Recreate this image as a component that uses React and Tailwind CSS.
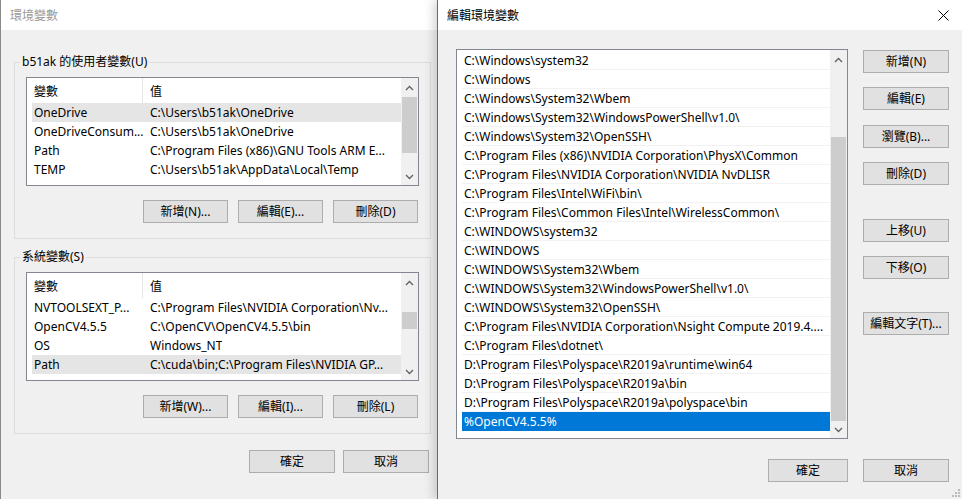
import React from 'react';

const Up = () => (
  <svg width="9" height="6" viewBox="0 0 9 6">
    <path d="M1 5L4.5 1.5L8 5" fill="none" stroke="#606060" strokeWidth="1.3" />
  </svg>
);
const Down = () => (
  <svg width="9" height="6" viewBox="0 0 9 6">
    <path d="M1 1L4.5 4.5L8 1" fill="none" stroke="#606060" strokeWidth="1.3" />
  </svg>
);

function ScrollBar({ pt, h }) {
  return (
    <div className="w-[17px] shrink-0 bg-[#f0f0f0] flex flex-col">
      <div className="h-[17px] shrink-0 flex items-center justify-center pt-[2px]">
        <Up />
      </div>
      <div className={`flex-1 flex flex-col ${pt}`}>
        <div className={`mx-[1px] bg-[#cdcdcd] ${h}`} />
      </div>
      <div className="h-[17px] shrink-0 flex items-center justify-center">
        <Down />
      </div>
    </div>
  );
}

function Btn({ children, w = 'w-[85px]', extra = '' }) {
  return (
    <div
      className={`${w} ${extra} h-[23px] shrink-0 border border-[#adadad] bg-[#e1e1e1] flex items-center justify-center leading-none`}
    >
      {children}
    </div>
  );
}

function VarList({ rows, sel, mt, pt, h }) {
  return (
    <div className={`${mt} ml-[6px] w-[393px] h-[109px] border border-[#828790] bg-white flex overflow-hidden`}>
      <div className="flex-1 pl-[5px] overflow-hidden">
        <div className="h-[25px] flex">
          <div className="w-[111px] shrink-0 border-r border-[#e5e5e5] pl-[2px] flex items-center pt-[2px]">變數</div>
          <div className="pl-[7px] flex items-center pt-[2px]">值</div>
        </div>
        {rows.map(([k, v], i) => (
          <div key={i} className={`h-[19px] flex items-center pt-[1px] ${i === sel ? 'bg-[#e5e5e5]' : ''}`}>
            <div className="w-[111px] shrink-0 pl-[2px] whitespace-nowrap overflow-hidden">{k}</div>
            <div className="pl-[7px] whitespace-nowrap overflow-hidden">{v}</div>
          </div>
        ))}
      </div>
      <ScrollBar pt={pt} h={h} />
    </div>
  );
}

const userVars = [
  ['OneDrive', 'C:\\Users\\b51ak\\OneDrive'],
  ['OneDriveConsum...', 'C:\\Users\\b51ak\\OneDrive'],
  ['Path', 'C:\\Program Files (x86)\\GNU Tools ARM E...'],
  ['TEMP', 'C:\\Users\\b51ak\\AppData\\Local\\Temp'],
];

const sysVars = [
  ['NVTOOLSEXT_P...', 'C:\\Program Files\\NVIDIA Corporation\\Nv...'],
  ['OpenCV4.5.5', 'C:\\OpenCV\\OpenCV4.5.5\\bin'],
  ['OS', 'Windows_NT'],
  ['Path', 'C:\\cuda\\bin;C:\\Program Files\\NVIDIA GP...'],
];

const paths = [
  'C:\\Windows\\system32',
  'C:\\Windows',
  'C:\\Windows\\System32\\Wbem',
  'C:\\Windows\\System32\\WindowsPowerShell\\v1.0\\',
  'C:\\Windows\\System32\\OpenSSH\\',
  'C:\\Program Files (x86)\\NVIDIA Corporation\\PhysX\\Common',
  'C:\\Program Files\\NVIDIA Corporation\\NVIDIA NvDLISR',
  'C:\\Program Files\\Intel\\WiFi\\bin\\',
  'C:\\Program Files\\Common Files\\Intel\\WirelessCommon\\',
  'C:\\WINDOWS\\system32',
  'C:\\WINDOWS',
  'C:\\WINDOWS\\System32\\Wbem',
  'C:\\WINDOWS\\System32\\WindowsPowerShell\\v1.0\\',
  'C:\\WINDOWS\\System32\\OpenSSH\\',
  'C:\\Program Files\\NVIDIA Corporation\\Nsight Compute 2019.4....',
  'C:\\Program Files\\dotnet\\',
  'D:\\Program Files\\Polyspace\\R2019a\\runtime\\win64',
  'D:\\Program Files\\Polyspace\\R2019a\\bin',
  'D:\\Program Files\\Polyspace\\R2019a\\polyspace\\bin',
  '%OpenCV4.5.5%',
];

function LeftWindow() {
  return (
    <div className="w-[437px] shrink-0 h-full border-l border-[#8a8a8a] flex flex-col bg-[#f0f0f0]">
      <div className="h-[30px] shrink-0 bg-white flex items-center pl-[9px] pt-[1px] text-[#999999]">環境變數</div>
      <div className="flex flex-col">
        <fieldset className="ml-[13px] mt-[24px] w-[417px] border border-[#dcdcdc] pl-[5px] pb-[15px]">
          <legend className="px-[2px] leading-[16px]">b51ak 的使用者變數(U)</legend>
          <VarList rows={userVars} sel={0} mt="mt-[7px]" pt="pt-[2px]" h="h-[56px]" />
          <div className="mt-[14px] flex justify-end gap-[10px] pr-[12px]">
            <Btn>新增(N)...</Btn>
            <Btn>編輯(E)...</Btn>
            <Btn>刪除(D)</Btn>
          </div>
        </fieldset>
        <fieldset className="ml-[13px] mt-[10px] w-[417px] border border-[#dcdcdc] pl-[5px] pb-[15px]">
          <legend className="px-[2px] leading-[16px]">系統變數(S)</legend>
          <VarList rows={sysVars} sel={3} mt="mt-[7px]" pt="pt-[22px]" h="h-[17px]" />
          <div className="mt-[14px] flex justify-end gap-[10px] pr-[12px]">
            <Btn>新增(W)...</Btn>
            <Btn>編輯(I)...</Btn>
            <Btn>刪除(L)</Btn>
          </div>
        </fieldset>
        <div className="mt-[16px] flex justify-end gap-[8px] pr-[8px]">
          <Btn w="w-[86px]">確定</Btn>
          <Btn w="w-[86px]">取消</Btn>
        </div>
      </div>
    </div>
  );
}

function RightWindow() {
  return (
    <div className="relative z-10 flex-1 h-full border-l border-[#6b6b6b] bg-[#f0f0f0] flex flex-col shadow-[-3px_0_10px_rgba(0,0,0,0.18)]">
      <div className="h-[30px] shrink-0 bg-white flex items-center justify-between pl-[9px] pr-[13px]">
        <span className="pt-[1px]">編輯環境變數</span>
        <svg width="11" height="11" viewBox="0 0 11 11">
          <path d="M0.5 0.5L10.5 10.5M10.5 0.5L0.5 10.5" stroke="#000" strokeWidth="1" />
        </svg>
      </div>
      <div className="flex pl-[18px]">
        <div className="mt-[19px] w-[392px] h-[390px] border border-[#828790] bg-white flex overflow-hidden">
          <div className="flex-1 pl-[5px] pt-[1px] overflow-hidden">
            {paths.map((p, i) =>
              i === paths.length - 1 ? (
                <div key={i} className="h-[19px] flex items-center pl-[2px] pt-[1px] bg-[#0078d7] text-white whitespace-nowrap">
                  {p}
                </div>
              ) : (
                <div
                  key={i}
                  className="h-[19px] flex items-center pl-[2px] pt-[1px] border-b border-[#f2f2f2] whitespace-nowrap overflow-hidden"
                >
                  {p}
                </div>
              )
            )}
          </div>
          <div className="w-[17px] shrink-0 bg-[#f0f0f0] flex flex-col">
            <div className="h-[17px] shrink-0 flex items-center justify-center pt-[2px]">
              <Up />
            </div>
            <div className="flex-1 flex flex-col pt-[70px]">
              <div className="mx-[1px] bg-[#cdcdcd] flex-1" />
            </div>
            <div className="h-[17px] shrink-0 flex items-center justify-center">
              <Down />
            </div>
          </div>
        </div>
        <div className="ml-[15px] mt-[20px] flex flex-col">
          <Btn w="w-[86px]">新增(N)</Btn>
          <Btn w="w-[86px]" extra="mt-[14px]">編輯(E)</Btn>
          <Btn w="w-[86px]" extra="mt-[15px]">瀏覽(B)...</Btn>
          <Btn w="w-[86px]" extra="mt-[14px]">刪除(D)</Btn>
          <Btn w="w-[86px]" extra="mt-[34px]">上移(U)</Btn>
          <Btn w="w-[86px]" extra="mt-[14px]">下移(O)</Btn>
          <Btn w="w-[86px]" extra="mt-[33px]">編輯文字(T)...</Btn>
        </div>
      </div>
      <div className="mt-[20px] flex justify-end gap-[15px] pr-[13px]">
        <Btn w="w-[80px]">確定</Btn>
        <Btn w="w-[86px]">取消</Btn>
      </div>
      <svg className="absolute right-[2px] bottom-[2px]" width="8" height="8" viewBox="0 0 8 8">
        <rect x="6" y="0" width="2" height="2" fill="#bcbcbc" />
        <rect x="3" y="3" width="2" height="2" fill="#bcbcbc" />
        <rect x="6" y="3" width="2" height="2" fill="#bcbcbc" />
        <rect x="0" y="6" width="2" height="2" fill="#bcbcbc" />
        <rect x="3" y="6" width="2" height="2" fill="#bcbcbc" />
        <rect x="6" y="6" width="2" height="2" fill="#bcbcbc" />
      </svg>
    </div>
  );
}

export default function App() {
  return (
    <div className="w-[962px] h-[499px] flex overflow-hidden font-['Noto_Sans','Noto_Sans_CJK_TC',sans-serif] text-[12px] text-black bg-[#f0f0f0]">
      <LeftWindow />
      <RightWindow />
    </div>
  );
}
